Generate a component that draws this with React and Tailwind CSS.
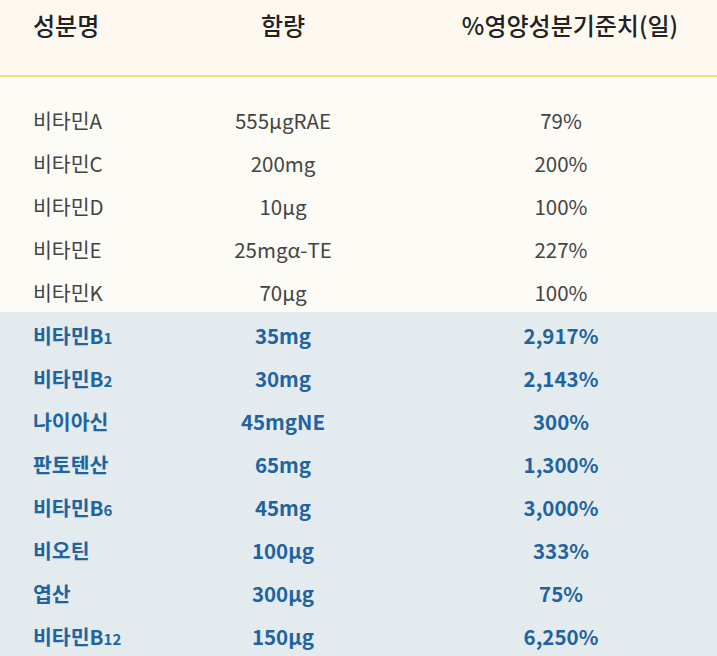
const basic = [
  { name: "비타민A", amount: "555μgRAE", pct: "79%" },
  { name: "비타민C", amount: "200mg", pct: "200%" },
  { name: "비타민D", amount: "10μg", pct: "100%" },
  { name: "비타민E", amount: "25mgα-TE", pct: "227%" },
  { name: "비타민K", amount: "70μg", pct: "100%" },
];

const highlight = [
  { name: "비타민B", sub: "1", amount: "35mg", pct: "2,917%" },
  { name: "비타민B", sub: "2", amount: "30mg", pct: "2,143%" },
  { name: "나이아신", amount: "45mgNE", pct: "300%" },
  { name: "판토텐산", amount: "65mg", pct: "1,300%" },
  { name: "비타민B", sub: "6", amount: "45mg", pct: "3,000%" },
  { name: "비오틴", amount: "100μg", pct: "333%" },
  { name: "엽산", amount: "300μg", pct: "75%" },
  { name: "비타민B", sub: "12", amount: "150μg", pct: "6,250%" },
];

function Row({ item }) {
  return (
    <div className="flex h-[43px] items-center pt-[4px]">
      <div className="w-[210px] pl-[33px]">
        {item.name}
        {item.sub && <span className="text-[15px]">{item.sub}</span>}
      </div>
      <div className="w-[146px] text-center">{item.amount}</div>
      <div className="flex-1 pl-[49px] text-center">{item.pct}</div>
    </div>
  );
}

export default function App() {
  return (
    <div
      className="h-[656px] w-full overflow-hidden bg-[#fcfbf5]"
      style={{ fontFamily: '"Noto Sans CJK KR", "Noto Sans", sans-serif' }}
    >
      <div className="flex h-[75px] items-start bg-[#fdf9f1] pt-[7px] text-[24px] font-medium text-[#222]">
        <div className="w-[210px] pl-[33px]">성분명</div>
        <div className="w-[146px] text-center">함량</div>
        <div className="flex-1 pl-[67px] text-center">%영양성분기준치(일)</div>
      </div>
      <div className="h-[2px] bg-[#f6d97c]" />

      <div className="pt-[20px] text-[20.5px] text-[#444]">
        {basic.map((item) => (
          <Row key={item.name} item={item} />
        ))}
      </div>

      <div className="bg-[#e3ebef] text-[20.5px] font-bold text-[#1f64a0]">
        {highlight.map((item) => (
          <Row key={item.name + (item.sub || "")} item={item} />
        ))}
      </div>
    </div>
  );
}
